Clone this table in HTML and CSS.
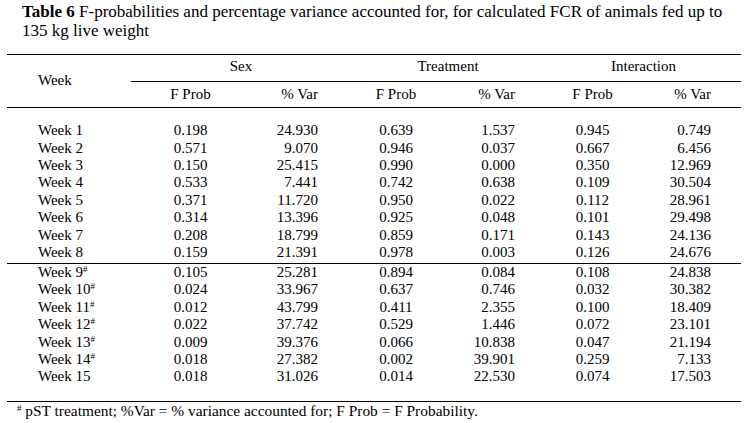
FILE: index.html
```html
<!DOCTYPE html>
<html>
<head>
<meta charset="utf-8">
<link rel="stylesheet" href="styles.css">
</head>
<body>
<div class="page">
  <p class="caption"><b>Table 6</b> F-probabilities and percentage variance accounted for, for calculated FCR of animals fed up to 135 kg live weight</p>
  <table class="data">
    <colgroup>
      <col class="c0"><col class="c1"><col class="c2"><col class="c3"><col class="c4"><col class="c5"><col class="c6">
    </colgroup>
    <thead>
      <tr class="grp">
        <th class="week-h" rowspan="2">Week</th>
        <th class="g g-sex" colspan="2">Sex</th>
        <th class="g g-trt" colspan="2">Treatment</th>
        <th class="g g-int" colspan="2">Interaction</th>
      </tr>
      <tr class="sub">
        <th class="fp">F Prob</th><th class="v v1">% Var</th>
        <th class="fp">F Prob</th><th class="v v2">% Var</th>
        <th class="fp">F Prob</th><th class="v v3">% Var</th>
      </tr>
    </thead>
    <tbody>
      <tr class="first"><td class="wk">Week 1</td><td class="fp">0.198</td><td class="v v1">24.930</td><td class="fp">0.639</td><td class="v v2">1.537</td><td class="fp">0.945</td><td class="v v3">0.749</td></tr>
      <tr><td class="wk">Week 2</td><td class="fp">0.571</td><td class="v v1">9.070</td><td class="fp">0.946</td><td class="v v2">0.037</td><td class="fp">0.667</td><td class="v v3">6.456</td></tr>
      <tr><td class="wk">Week 3</td><td class="fp">0.150</td><td class="v v1">25.415</td><td class="fp">0.990</td><td class="v v2">0.000</td><td class="fp">0.350</td><td class="v v3">12.969</td></tr>
      <tr><td class="wk">Week 4</td><td class="fp">0.533</td><td class="v v1">7.441</td><td class="fp">0.742</td><td class="v v2">0.638</td><td class="fp">0.109</td><td class="v v3">30.504</td></tr>
      <tr><td class="wk">Week 5</td><td class="fp">0.371</td><td class="v v1">11.720</td><td class="fp">0.950</td><td class="v v2">0.022</td><td class="fp">0.112</td><td class="v v3">28.961</td></tr>
      <tr><td class="wk">Week 6</td><td class="fp">0.314</td><td class="v v1">13.396</td><td class="fp">0.925</td><td class="v v2">0.048</td><td class="fp">0.101</td><td class="v v3">29.498</td></tr>
      <tr><td class="wk">Week 7</td><td class="fp">0.208</td><td class="v v1">18.799</td><td class="fp">0.859</td><td class="v v2">0.171</td><td class="fp">0.143</td><td class="v v3">24.136</td></tr>
      <tr class="pre-split"><td class="wk">Week 8</td><td class="fp">0.159</td><td class="v v1">21.391</td><td class="fp">0.978</td><td class="v v2">0.003</td><td class="fp">0.126</td><td class="v v3">24.676</td></tr>
      <tr class="split"><td class="wk">Week 9<sup>#</sup></td><td class="fp">0.105</td><td class="v v1">25.281</td><td class="fp">0.894</td><td class="v v2">0.084</td><td class="fp">0.108</td><td class="v v3">24.838</td></tr>
      <tr><td class="wk">Week 10<sup>#</sup></td><td class="fp">0.024</td><td class="v v1">33.967</td><td class="fp">0.637</td><td class="v v2">0.746</td><td class="fp">0.032</td><td class="v v3">30.382</td></tr>
      <tr><td class="wk">Week 11<sup>#</sup></td><td class="fp">0.012</td><td class="v v1">43.799</td><td class="fp">0.411</td><td class="v v2">2.355</td><td class="fp">0.100</td><td class="v v3">18.409</td></tr>
      <tr><td class="wk">Week 12<sup>#</sup></td><td class="fp">0.022</td><td class="v v1">37.742</td><td class="fp">0.529</td><td class="v v2">1.446</td><td class="fp">0.072</td><td class="v v3">23.101</td></tr>
      <tr><td class="wk">Week 13<sup>#</sup></td><td class="fp">0.009</td><td class="v v1">39.376</td><td class="fp">0.066</td><td class="v v2">10.838</td><td class="fp">0.047</td><td class="v v3">21.194</td></tr>
      <tr><td class="wk">Week 14<sup>#</sup></td><td class="fp">0.018</td><td class="v v1">27.382</td><td class="fp">0.002</td><td class="v v2">39.901</td><td class="fp">0.259</td><td class="v v3">7.133</td></tr>
      <tr class="last"><td class="wk">Week 15</td><td class="fp">0.018</td><td class="v v1">31.026</td><td class="fp">0.014</td><td class="v v2">22.530</td><td class="fp">0.074</td><td class="v v3">17.503</td></tr>
    </tbody>
  </table>
  <p class="note"><sup>#</sup> pST treatment; %Var = % variance accounted for; F Prob = F Probability.</p>
</div>
</body>
</html>
```

FILE: styles.css
```css
html, body {
  margin: 0;
  padding: 0;
  background: #ffffff;
}

body {
  font-family: "Liberation Serif", "Times New Roman", serif;
  color: #000000;
}

.page {
  width: 746px;
}

.caption {
  margin: 0;
  padding: 1.6px 6px 0 22px;
  font-size: 17px;
  line-height: 19px;
}

.caption b {
  font-weight: bold;
}

.data {
  margin: 14.4px 0 0 7px;
  width: 734px;
  table-layout: fixed;
  border-collapse: separate;
  border-spacing: 0;
  border-top: 1px solid #000;
  font-size: 15px;
  line-height: 17.4px;
}

.c0 { width: 124px; }
.c1 { width: 119px; }
.c2 { width: 80px; }
.c3 { width: 132px; }
.c4 { width: 65px; }
.c5 { width: 131px; }
.c6 { width: 83px; }

.data th,
.data td {
  padding: 0;
  font-weight: normal;
  white-space: nowrap;
}

.data .grp th {
  padding-top: 3px;
  padding-bottom: 6px;
}

.data .grp .g {
  border-bottom: 1px solid #000;
  text-align: center;
}

.data .g-sex { padding-left: 21px; }
.data .g-trt { padding-left: 39px; }
.data .g-int { padding-left: 19px; }

.data .grp .week-h {
  text-align: left;
  padding: 0 0 0 31px;
  vertical-align: middle;
  border-bottom: 1px solid #000;
}

.data .sub th {
  padding-top: 4px;
  padding-bottom: 3.5px;
  border-bottom: 1px solid #000;
}

.data .fp { text-align: center; }
.data .v { text-align: right; }
.data th.v1, .data td.v1,
.data th.v2, .data td.v2 { padding-right: 12px; }
.data th.v3, .data td.v3 { padding-right: 30px; }

.data td.wk {
  text-align: left;
  padding-left: 31px;
}

.data .first td { padding-top: 13.9px; }
.data .pre-split td { padding-bottom: 1.5px; }
.data .split td { border-top: 1px solid #000; }
.data .last td {
  padding-bottom: 15.3px;
  border-bottom: 1px solid #000;
}

.data sup,
.note sup {
  font-size: 9px;
  line-height: 0;
  vertical-align: 5px;
}

.note {
  margin: 0;
  padding-left: 17px;
  font-size: 15.4px;
  line-height: 17.4px;
}
```
